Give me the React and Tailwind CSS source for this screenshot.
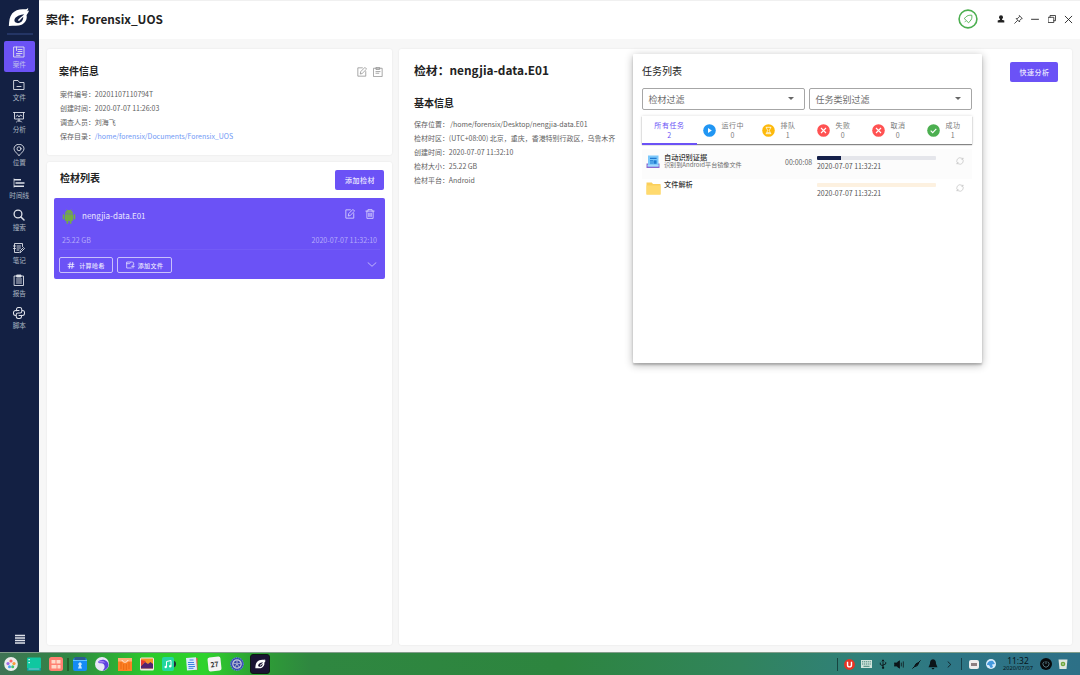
import React from "react";

const LINE = { fill: "none", stroke: "currentColor", strokeLinecap: "round", strokeLinejoin: "round" };

function Icon({ className = "", box = "0 0 24 24", w = 1.8, children }) {
  return (
    <svg viewBox={box} className={"block shrink-0 " + className} {...LINE} strokeWidth={w}>
      {children}
    </svg>
  );
}

function Flame({ className }) {
  return (
    <svg viewBox="0 0 66 58" className={"block shrink-0 " + className}>
      <path
        fill="currentColor"
        fillRule="evenodd"
        d="M2 55C3 40 4 27 12 17C21 6 36 2 52 4C55 4 58 3 61 0C61 4 60 8 57 10L64 8C62 14 59 18 56 22C59 33 52 46 41 51C31 56 17 53 2 55ZM49 19C38 20 21 25 19 37C18 44 25 47 33 46C43 44 46 35 46 27C42 30 39 34 35 38C34 40 30 40 30 37C32 32 42 27 49 19Z"
      />
    </svg>
  );
}

const navItems = [
  {
    label: "案件",
    active: true,
    icon: <path d="M2 2h20v20H2zM7 2v7M10 7h8M10 11h8M7 15h11M7 18.500h7" />,
  },
  { label: "文件", icon: <path d="M2 3h8l3 4h9v14H2zM8 15h8" /> },
  { label: "分析", icon: <path d="M1 3h22M3 3v13h18V3M12 16v4M7 22l2-2h6l2 2M6 11l3-3 3 4 3-4 3 2" /> },
  {
    label: "位置",
    icon: (
      <>
        <path d="M12 23C6 17 2 13.500 2 9.500a10 9 0 0 1 20 0c0 4-4 7.500-10 13.500z" />
        <circle cx="12" cy="9.500" r="4" />
      </>
    ),
  },
  {
    label: "时间线",
    icon: (
      <>
        <path strokeWidth="1.500" strokeLinecap="butt" d="M2 3v18" />
        <path strokeWidth="3.400" strokeLinecap="butt" d="M2 5.500h14M5 12h18M2 18.500h20" />
      </>
    ),
  },
  {
    label: "搜索",
    icon: (
      <>
        <circle cx="10" cy="10" r="7.800" strokeWidth="2.600" />
        <path strokeWidth="3" d="M16 16l6 6" />
      </>
    ),
  },
  { label: "笔记", icon: <path d="M19 9V3H3v18h9M1 8h4M1 13h4M8 8h7M8 12h7M8 16h4M14 21l1-4 6-6 2 2-6 6z" /> },
  {
    label: "报告",
    icon: (
      <>
        <path d="M3 4h18v19H3zM7 10h10M7 14h10M7 18h10" />
        <path fill="currentColor" d="M8 2h8v4H8z" />
      </>
    ),
  },
  {
    label: "脚本",
    icon: (
      <path
        strokeWidth="2.100"
        d="M7 7.500V5c0-2.500 1.500-4 4-4h2.500C16 1 17.500 2.500 17.500 5v4c0 2-1.500 3-3.500 3h-4c-2 0-3.500 1-3.500 3v4c0 2.500 1.500 4 4 4H13c2.500 0 4-1.500 4-4v-2.500M12 7H5.500C3 7 1 8.500 1 11v2c0 2.500 2 4 4 4h1.500M17.500 7H19c2.500 0 4 1.500 4 4v2c0 2.500-1.500 4-4 4h-7"
      />
    ),
  },
];

function Sidebar() {
  return (
    <aside className="flex w-[39px] shrink-0 flex-col items-center bg-[#132043] text-[#dfe2ea]">
      <Flame className="mt-[8px] mr-[2px] h-[19px] w-[22px] text-white" />
      <div className="mt-[6px] h-[2px] w-[26px] bg-[#243565]" />
      <nav className="mt-[6px] flex flex-col gap-[1.650px]">
        {navItems.map((item) => (
          <div
            key={item.label}
            className={
              "flex h-[31px] w-[31px] flex-col items-center rounded-[2px] pr-[0.500px] " +
              (item.active ? "bg-[#6b52f6]" : "")
            }
          >
            <Icon className="mt-[5px] h-[12px] w-[12px]">{item.icon}</Icon>
            <span className="mt-[1.200px] whitespace-nowrap text-[6.600px] leading-[10px] opacity-75">
              {item.label}
            </span>
          </div>
        ))}
      </nav>
      <Icon className="mt-auto mb-[8px] h-[10px] w-[10px]" box="0 0 10 10" w={1.3}>
        <path strokeLinecap="butt" d="M0 1.500h10M0 4h10M0 6.500h10M0 9h10" />
      </Icon>
    </aside>
  );
}

function Header() {
  return (
    <header className="flex h-[39px] shrink-0 items-center border-t border-[#f0f0f0] bg-white pr-[7px] pb-[2px] pl-[7px] text-[#222]">
      <h1 className="pb-px text-[11.800px] font-bold">案件：Forensix_UOS</h1>
      <div className="ml-auto flex items-center">
        <svg viewBox="0 0 20 20" className="mr-[19px] block h-[20px] w-[20px]" fill="none" stroke="#4caf50">
          <circle cx="10" cy="10" r="8.900" strokeWidth="1.600" />
          <path
            strokeWidth="0.900"
            strokeLinejoin="round"
            d="M13.800 6.200C11 6 9 6.600 7.800 8.200L6.200 9.500l4.400 4.300 1.400-1.700c1.600-1.300 2.200-3.200 1.800-5.900zM7.600 12.200l-1 1"
          />
        </svg>
        <svg viewBox="0 0 8 8" className="mr-[9px] block h-[8px] w-[8px]" fill="#222">
          <circle cx="4" cy="2.300" r="2" />
          <path d="M3 3.500h2v1.200l2.300.8V7.500H.7V5.500L3 4.700z" />
        </svg>
        <Icon className="mr-[8px] h-[9px] w-[9px]" box="0 0 9 9" w={0.8}>
          <path d="M5.500.8 8.300 3.500 7.300 3.800 5.700 5.500 5.500 7 2.200 3.600 3.800 3.400 5.300 1.700zM3.500 5.500.7 8.300" />
        </Icon>
        <Icon className="mr-[9px] h-[8px] w-[8px]" box="0 0 8 8" w={0.9}>
          <path d="M.5 4.300h7" />
        </Icon>
        <Icon className="mr-[8px] h-[8px] w-[8px]" box="0 0 8 8" w={0.8}>
          <path d="M.5 2.300h5.300v5.200H.5zM2 2.300V.5h5.500v5.200H5.800" />
        </Icon>
        <Icon className="h-[9px] w-[9px]" box="0 0 9 9" w={0.9}>
          <path d="M1.200 1.200l6.600 6.600M7.800 1.200 1.200 7.800" />
        </Icon>
      </div>
    </header>
  );
}

function InfoLine({ label, children }) {
  return (
    <div className="flex h-[14px] items-center whitespace-nowrap text-[6.980px] leading-[14px] text-[#606060]">
      <span>{label}：</span>
      {children}
    </div>
  );
}

const EditPath = <path d="M13 2H2v20h19V11M8 16l1-5L19 1l4 4-10 10z" />;

function CaseInfo() {
  return (
    <section className="h-[106px] rounded-[2px] bg-white pt-[13px] pr-[9.500px] pl-[13px] shadow-[0_0_2px_rgba(0,0,0,0.09)]">
      <div className="-ml-px flex h-[18px] items-center justify-between">
        <h2 className="pb-px text-[10px] font-bold text-[#222]">案件信息</h2>
        <div className="flex gap-[6px] pt-[2px] text-[#8b8b8b]">
          <Icon className="h-[10px] w-[10px]">{EditPath}</Icon>
          <Icon className="h-[10px] w-[10px]">
            <path d="M2 3h20v20H2zM8 1h8v5H8zM7 11h10M7 15h7" />
          </Icon>
        </div>
      </div>
      <div className="pt-[7px]">
        <InfoLine label="案件编号">20201107110794T</InfoLine>
        <InfoLine label="创建时间">2020-07-07 11:26:03</InfoLine>
        <InfoLine label="调查人员">刘海飞</InfoLine>
        <InfoLine label="保存目录">
          <span className="text-[#6f98f5]">/home/forensix/Documents/Forensix_UOS</span>
        </InfoLine>
      </div>
    </section>
  );
}

function OutlineButton({ icon, children }) {
  return (
    <button className="flex h-[16px] items-center justify-center gap-[3px] rounded-[2px] border border-[#c9c0fb] pt-px text-[6px] font-medium tracking-[0.400px] text-[#ebe8fe] first:w-[54px] last:w-[55px]">
      {icon}
      {children}
    </button>
  );
}

function EvidenceList() {
  return (
    <section className="flex grow flex-col rounded-[2px] bg-white px-[7px] pt-[8px] shadow-[0_0_2px_rgba(0,0,0,0.09)]">
      <div className="flex h-[20px] items-center justify-between pr-px pl-[6px]">
        <h2 className="pb-[6px] text-[10px] font-bold text-[#222]">检材列表</h2>
        <button className="flex h-[20px] w-[49px] items-center justify-center rounded-[2px] bg-[#6b52f6] pl-px text-[7px] font-medium tracking-[0.500px] text-[#ebe8fe]">
          添加检材
        </button>
      </div>
      <article className="mt-[8px] flex h-[81px] flex-col rounded-[2px] bg-[#6b52f6] px-[5px]">
        <div className="flex h-[36px] items-center pl-[3px]">
          <svg viewBox="0 0 14 15" className="mt-px block h-[15px] w-[14px]" fill="#74ab45">
            <path d="M3 4.700C3.200 3 4 2 5 1.500L4.400.5 4.800.3 5.500 1.300a4 4 0 0 1 3 0L9.200.3l.4.200L9 1.500C10 2 10.800 3 11 4.700z" />
            <path d="M3 5.200h8v6.100a.8.8 0 0 1-.8.800H9.500v1.800a.8.8 0 0 1-1.700 0v-1.800H6.200v1.800a.8.8 0 0 1-1.700 0v-1.800h-.7a.8.8 0 0 1-.8-.8z" />
            <rect x=".7" y="5.200" width="1.700" height="5.400" rx=".8" />
            <rect x="11.600" y="5.200" width="1.700" height="5.400" rx=".8" />
            <circle cx="5.300" cy="3.200" r=".4" fill="#6b52f6" />
            <circle cx="8.700" cy="3.200" r=".4" fill="#6b52f6" />
          </svg>
          <span className="ml-[6px] pt-px text-[8.050px] text-[#e9e5fe]">nengjia-data.E01</span>
          <div className="mr-[5px] ml-auto flex gap-[10px] pb-[4px] text-[#dcd6fd]">
            <Icon className="h-[10px] w-[10px]" w={2}>
              {EditPath}
            </Icon>
            <Icon className="h-[10px] w-[10px]" w={2}>
              <path d="M2 5h20M7 5V1.500h10V5M4.500 5v17.500h15V5M9 10v8M12 10v8M15 10v8" />
            </Icon>
          </div>
        </div>
        <div className="flex h-[16px] items-center justify-between border-b border-[#735bf7] pr-[3px] pb-[3px] pl-[3px] text-[7.080px] text-[#b5aafb]">
          <span>25.22 GB</span>
          <span>2020-07-07 11:32:10</span>
        </div>
        <div className="flex h-[29px] items-center justify-between pr-[3px]">
          <div className="flex gap-[4px]">
            <OutlineButton
              icon={
                <Icon className="mr-px h-[7px] w-[8px]" w={3.2}>
                  <path d="M2 8h20M2 16h20M9 2 6 22M18 2l-3 20" />
                </Icon>
              }
            >
              计算哈希
            </OutlineButton>
            <OutlineButton
              icon={
                <Icon className="h-[8px] w-[9px]" box="0 0 27 24" w={2.2}>
                  <path d="M16 21H2V3h18l3 3v5M2 8h9l2-3M17 16h8M21 12v9" />
                </Icon>
              }
            >
              添加文件
            </OutlineButton>
          </div>
          <Icon className="h-[5px] w-[10px] text-[#d5cefd]" box="0 0 10 5" w={0.8}>
            <path d="M1 .7 5 4.300 9 .7" />
          </Icon>
        </div>
      </article>
    </section>
  );
}

function Detail() {
  return (
    <section className="flex w-[673px] shrink-0 items-start justify-between rounded-[2px] bg-white pr-[14px] pl-[15px] shadow-[0_0_2px_rgba(0,0,0,0.09)]">
      <div>
        <h1 className="mt-[12px] text-[11.850px] leading-[18px] font-bold text-[#222]">检材：nengjia-data.E01</h1>
        <h2 className="mt-[16px] mb-[6px] text-[10px] leading-[16px] font-bold text-[#222]">基本信息</h2>
        <InfoLine label="保存位置">
          <span className="pl-[1.500px]">/home/forensix/Desktop/nengjia-data.E01</span>
        </InfoLine>
        <InfoLine label="检材时区">(UTC+08:00) 北京，重庆，香港特别行政区，乌鲁木齐</InfoLine>
        <InfoLine label="创建时间">2020-07-07 11:32:10</InfoLine>
        <InfoLine label="检材大小">25.22 GB</InfoLine>
        <InfoLine label="检材平台">Android</InfoLine>
      </div>
      <button className="mt-[13px] flex h-[20px] w-[48px] items-center justify-center rounded-[2px] bg-[#6b52f6] pl-px text-[7px] font-medium tracking-[0.500px] text-[#ebe8fe]">
        快速分析
      </button>
    </section>
  );
}

const statusIcons = {
  run: (
    <>
      <circle cx="6.500" cy="6.500" r="6.300" fill="#2196f3" />
      <path d="M5 3.900v5.200l3.800-2.600z" fill="#fff" />
    </>
  ),
  queue: (
    <>
      <circle cx="6.500" cy="6.500" r="6.300" fill="#fdb90b" />
      <path
        d="M3.700 3.300h5.600M3.700 9.700h5.600M4.500 3.500c0 1.800 1.200 2.100 1.200 3S4.500 7.700 4.500 9.500M8.500 3.500c0 1.800-1.200 2.100-1.200 3s1.200 1.200 1.200 3M5 8.700h3"
        stroke="#fff"
        strokeWidth=".8"
        fill="none"
      />
    </>
  ),
  fail: (
    <>
      <circle cx="6.500" cy="6.500" r="6.300" fill="#ff5252" />
      <path d="M4 4l5 5M9 4 4 9" stroke="#fff" strokeWidth="1.100" />
    </>
  ),
  ok: (
    <>
      <circle cx="6.500" cy="6.500" r="6.300" fill="#4caf50" />
      <path d="M3.700 6.600l2 2 3.600-3.800" stroke="#fff" strokeWidth="1.100" fill="none" />
    </>
  ),
};

const tabs = [
  { name: "运行中", count: 0, icon: "run", pad: "pl-[6px]" },
  { name: "排队", count: 1, icon: "queue", pad: "pl-[10px]" },
  { name: "失败", count: 0, icon: "fail", pad: "pl-[10px]" },
  { name: "取消", count: 0, icon: "fail", pad: "pl-[10px]" },
  { name: "成功", count: 1, icon: "ok", pad: "pl-[10px]" },
];

function Filter({ children }) {
  return (
    <div className="flex h-[22px] flex-1 items-center justify-between rounded-[2px] border border-[#a6a6a6] pt-px pr-[10px] pl-[5.500px] text-[9px] text-[#6e6e6e]">
      {children}
      <span className="mb-[2px] h-0 w-0 border-x-[3px] border-t-[3px] border-x-transparent border-t-[#666]" />
    </div>
  );
}

function Task({ icon, name, note, elapsed, value, track, shade }) {
  return (
    <div className={"flex h-[27px] " + (shade ? "bg-[#fcfcfc]" : "")}>
      <div className="w-[22px] pl-[3px]">{icon}</div>
      <div className="w-[121px] whitespace-nowrap">
        <div className="mt-px text-[7.200px] leading-[8px] font-medium text-[#333]">{name}</div>
        <div className="mt-px text-[6.120px] leading-[6px] text-[#6d6d6d]">{note}</div>
      </div>
      <div className="w-[32px] pt-[5px] text-[7px] leading-[10px] text-[#666]">{elapsed}</div>
      <div className="w-[119px] pt-[3.500px]">
        <div className={"h-[4px] w-full overflow-hidden rounded-[1px] " + track}>
          <div className="h-full bg-[#15204a]" style={{ width: value + "%" }} />
        </div>
        <div className="mt-px text-[6.950px] leading-[11px] text-[#555]">2020-07-07 11:32:21</div>
      </div>
      <Icon className="mt-[5px] ml-[20px] h-[8px] w-[8px] text-[#c4c4c4]" w={2.2}>
        <path d="M5 19A10 10 0 0 1 16 2.800M19 5A10 10 0 0 1 8 21.200M2 20h4v-4M22 4h-4v4" />
      </Icon>
    </div>
  );
}

function TaskPopup() {
  return (
    <div className="absolute top-[54px] left-[633px] h-[309px] w-[349px] rounded-[1px] bg-white pt-[9px] pr-[10px] pl-[9px] shadow-[0_2px_2px_rgba(0,0,0,0.18),0_2px_8px_rgba(0,0,0,0.3)]">
      <h2 className="text-[10px] leading-[16px] text-[#222]">任务列表</h2>
      <div className="mt-[9px] flex gap-[4px]">
        <Filter>检材过滤</Filter>
        <Filter>任务类别过滤</Filter>
      </div>
      <div className="mt-[6px] flex h-[28px] shadow-[0_1px_1px_rgba(0,0,0,0.45),0_0_3px_rgba(0,0,0,0.14)]">
        <div className="h-[28.500px] w-[55px] border-b-2 border-[#6b52f6] bg-white pt-[4px] text-center text-[7px] leading-[10px] tracking-[0.600px] text-[#6b52f6]">
          所有任务
          <div>2</div>
        </div>
        {tabs.map((t) => (
          <div key={t.name} className={"flex w-[55px] pt-[4px] " + t.pad}>
            <svg viewBox="0 0 13 13" className="mt-[4px] mr-[5.500px] block h-[13px] w-[13px] shrink-0">
              {statusIcons[t.icon]}
            </svg>
            <div className="whitespace-nowrap text-center text-[7px] leading-[10px] tracking-[0.500px] text-[#7a7a7a]">
              {t.name}
              <div>{t.count}</div>
            </div>
          </div>
        ))}
      </div>
      <div className="mt-[5px] h-[3px] bg-[#fcfcfc]" />
      <Task
        shade
        name="自动识别证据"
        note="识别到Android平台镜像文件"
        elapsed="00:00:08"
        value={20}
        track="bg-[#e5e6eb]"
        icon={
          <svg viewBox="0 0 16 14" className="mt-[3px] block h-[14px] w-[16px]">
            <path d="M1.500 8.500h13V13h-13z" fill="#8a68cf" />
            <path d="M3 .5h10.500v11H3z" fill="#7cc8fb" />
            <path d="M5 3.300h6.600M5 5.800h3M5 8h3" stroke="#1f7ad0" strokeWidth="1.200" />
            <path d="M8.500 5.300h3.100v3.500H8.500z" fill="#1f7ad0" />
            <path d="M2.500 9.800h11v1.700h-11z" fill="#a6d9fd" />
          </svg>
        }
      />
      <Task
        name="文件解析"
        elapsed=""
        value={0}
        track="bg-[#fdf1e0]"
        icon={
          <svg viewBox="0 0 15 13" className="mt-[3px] ml-px block h-[13px] w-[15px]">
            <path d="M.5.500h5.200L7 2h7.500v10.500H.5z" fill="#fbcf5b" />
            <path d="M.5 3.500h14v9H.5z" fill="#ffda6e" />
          </svg>
        }
      />
    </div>
  );
}

function DockIcon({ className = "", size = "h-[14px] w-[14px]", box = "0 0 14 14", children }) {
  return (
    <svg viewBox={box} className={"block shrink-0 " + size + " " + className}>
      {children}
    </svg>
  );
}

function Dock() {
  return (
    <footer className="flex h-[23px] shrink-0 items-center justify-between border-t border-[#829d8b] bg-[linear-gradient(90deg,#3f7355_0px,#2f8743_70px,#2bcb2b_150px,#2ed32d_205px,#2da433_250px,#2f8740_310px,#2d853f_560px,#31845c_740px,#30807a_860px,#2e7685_950px,#2d7087_1080px)]">
      <div className="flex items-center pl-[4px]">
        <DockIcon>
          <circle cx="7" cy="7" r="6.900" fill="#ececec" />
          <circle cx="7" cy="4" r="1.600" fill="#f66" />
          <circle cx="4" cy="6.600" r="1.600" fill="#a16be8" />
          <circle cx="10" cy="6.600" r="1.600" fill="#fa9d3a" />
          <circle cx="5.500" cy="9.700" r="1.500" fill="#4aa0f6" />
          <circle cx="8.700" cy="9.700" r="1.500" fill="#48c36e" />
        </DockIcon>
        <DockIcon className="ml-[9px]">
          <rect y=".5" width="14" height="13" rx="1" fill="#10c7a0" />
          <path d="M0 11h14v2.500H0z" fill="#0b9ca0" />
          <path d="M1.500 2h1.300v1.300H1.500zM1.500 5h1.300v1.300H1.500z" fill="#fff" />
          <path d="M1.500 12h11" stroke="#a7eee8" strokeWidth=".8" />
        </DockIcon>
        <DockIcon className="ml-[8px]">
          <rect width="14" height="14" rx="2.500" fill="#ff8071" />
          <path d="M2.500 3h4v3.500h-4zM7.500 3h4v3.500h-4zM2.500 8h5v3.500h-5zM8.500 8h3v3.500h-3z" fill="#ffd9c8" />
        </DockIcon>
        <div className="mx-[4px] h-[13px] w-[2px] bg-[#245f2a]" />
        <DockIcon>
          <rect y="1" width="14" height="13" rx="2" fill="#158bf5" />
          <path d="M1.500 0h11v3h-11z" fill="#2b5c91" />
          <path d="M0 3.500h14" stroke="#64c4ff" />
          <path d="M7 5l2 2-1 1.500 1 3H5l1-3L5 7z" fill="#c5e8ff" />
        </DockIcon>
        <DockIcon className="ml-[8px]">
          <circle cx="7" cy="7" r="7" fill="#e8e6f8" />
          <path d="M3 5C6 1 13 3 13.500 7.500c0 3.500-3 6-6 6.200C11 11 10 6 6 6.300 4.500 6.400 3.500 6 3 5z" fill="#5c42de" />
          <path d="M3 5c2-2 6-1.500 7.500 1C8 4.500 6 6.500 3 5z" fill="#a47cf6" />
        </DockIcon>
        <DockIcon className="ml-[9px]">
          <path d="M0 1h14v13H0z" fill="#fd8025" />
          <path d="M0 1h14v3.500H0z" fill="#ffaf74" />
          <path d="M3 5v7M11 5v7M5.700 7v6M8.300 7v6" stroke="#e35f0c" strokeWidth=".7" />
          <path d="M4 3c.5 3 5.500 3 6 0" stroke="#fff" fill="none" strokeWidth=".8" />
        </DockIcon>
        <DockIcon className="ml-[8px]">
          <rect y=".5" width="14" height="13" rx="1.500" fill="#f2e8e5" />
          <path d="M1 1.500h12v10H1z" fill="#f79327" />
          <path d="M1 9l4-4 3 2 2.500-2L13 7v4.500H1z" fill="#552470" />
          <path d="M1 3l5 1-5 5z" fill="#e83930" />
        </DockIcon>
        <DockIcon className="ml-[8px]">
          <circle cx="10.500" cy="7" r="3.500" fill="#252a35" />
          <rect width="12" height="14" rx="2" fill="#23d6a1" />
          <path d="M4.500 10V4.500L9 3.500V9" stroke="#fff" fill="none" />
          <circle cx="3.700" cy="10" r="1.200" fill="#fff" />
          <circle cx="8.200" cy="9.200" r="1.200" fill="#fff" />
        </DockIcon>
        <DockIcon className="ml-[9px]">
          <path d="M4 1h8.500v12H5z" fill="#e5544d" />
          <path d="M1 1l10-.7 1 12.400-10 .8z" fill="#dceaff" />
          <path d="M4.500 3h4M3 5.500h6M3 7.500h6.500M3.500 9.500h6.500M3.500 11.300h5" stroke="#3c82e4" />
        </DockIcon>
        <div className="ml-[9px] h-[14px] w-[13px] -rotate-6 rounded-[2px] bg-[#f4f4f4] text-center text-[7px] leading-[14px] font-bold text-[#333]">
          27
        </div>
        <DockIcon className="ml-[9px]">
          <circle cx="7" cy="7" r="6.300" fill="#3544a9" stroke="#5976df" strokeWidth="1.200" strokeDasharray="1.500 .8" />
          <circle cx="7" cy="7" r="4.200" fill="none" stroke="#c5c9dc" strokeWidth="1.200" />
          <path d="M7 7V3M7 7l4-1M7 7 3 6M7 7l2.500 3.500M7 7l-2.500 3.500" stroke="#b9bdd2" strokeWidth=".9" />
        </DockIcon>
        <div className="ml-[6px] flex h-[20px] w-[20px] items-center justify-center rounded-[3px] border border-[#0b1a12] bg-[#1a1433] text-white">
          <Flame className="h-[10px] w-[11px]" />
        </div>
      </div>
      <div className="flex items-center pr-[12px] text-[#0c1418]">
        <div className="h-[13px] w-px bg-[#17443f]" />
        <DockIcon className="ml-[6px]" size="h-[11px] w-[11px]">
          <circle cx="7" cy="7" r="6.900" fill="#e83324" />
          <path d="M4.500 3.500v4c0 3.300 5 3.300 5 0v-4" stroke="#fff" strokeWidth="1.800" fill="none" />
        </DockIcon>
        <DockIcon className="ml-[6px]" size="h-[8px] w-[11px]" box="0 0 11 8">
          <path d="M0 0h11v8H0z" fill="#cfe4dc" />
          <path d="M1 1.800h9M1 4h9" stroke="#35796e" strokeWidth=".9" strokeDasharray="1.200 .7" />
          <path d="M2.500 6.300h6" stroke="#35796e" strokeWidth=".9" />
        </DockIcon>
        <Icon className="ml-[7px] h-[10px] w-[8px]" box="0 0 8 10" w={0.9}>
          <path d="M4 1v8M4 7 1.300 5.500V4M4 6l2.700-1V3.500M3 2l1-1 1 1" />
          <circle cx="4" cy="8.800" r=".6" fill="currentColor" />
        </Icon>
        <Icon className="ml-[7px] h-[9px] w-[11px]" box="0 0 11 9" w={0.8}>
          <path d="M.5 3h2L5.500.8v7.400L2.500 6h-2z" fill="currentColor" />
          <path d="M7.300 3v3M9.300 1.800v5.400" />
        </Icon>
        <Icon className="ml-[7px] h-[9px] w-[9px]" box="0 0 9 9" w={1}>
          <path d="M.7 8.300 8.300.7" />
          <path d="M2.500 6.500 4 3.800l3-1.500-1.500 3z" fill="currentColor" />
        </Icon>
        <svg viewBox="0 0 10 11" className="ml-[7px] block h-[11px] w-[10px]" fill="currentColor">
          <path d="M5 .3c2.500.3 3 2 3 4.500L9.500 8.300h-9L2 4.800C2 2.300 2.500.600 5 .3zM3.700 9h2.600c0 1.700-2.600 1.700-2.600 0z" />
        </svg>
        <Icon className="ml-[9px] h-[7px] w-[5px]" box="0 0 5 7" w={0.8}>
          <path d="M1 .8l2.800 2.700L1 6.200" />
        </Icon>
        <div className="ml-[9px] h-[12px] w-px bg-[#17404a]" />
        <DockIcon className="ml-[7px]" size="h-[9px] w-[10px]" box="0 0 10 9">
          <rect width="10" height="9" rx="2" fill="#eee" />
          <path d="M2 3h6v3H2z" fill="#8b7f81" />
        </DockIcon>
        <DockIcon className="ml-[7px]" size="h-[10px] w-[10px]" box="0 0 10 10">
          <circle cx="5" cy="5" r="5" fill="#d9edfb" />
          <path d="M1 6C1 3 4 1 7 2l2 3-3 .5L7 8 5 9C3 8 5 6 1 6z" fill="#4499dd" />
        </DockIcon>
        <div className="ml-[6px] flex w-[32px] flex-col items-center font-['Noto_Sans',sans-serif] text-[#07151b]">
          <span className="text-[8.400px] leading-[9px]">11:32</span>
          <span className="whitespace-nowrap text-[5.600px] leading-[7px]">2020/07/07</span>
        </div>
        <svg viewBox="0 0 12 12" className="ml-[6px] block h-[12px] w-[12px]" fill="none" stroke="#5b7f8b" strokeWidth=".9">
          <circle cx="6" cy="6" r="6" fill="#080a0c" stroke="none" />
          <path d="M6 3v3M4.200 3.700a3 3 0 1 0 3.600 0" />
        </svg>
        <DockIcon className="ml-[6px]" size="h-[10px] w-[10px]" box="0 0 10 10">
          <path d="M.5.500h9L8.500 10h-7z" fill="#dfe6df" />
          <circle cx="5" cy="5" r="2.300" fill="#6ea63b" />
          <circle cx="5" cy="5" r=".8" fill="#dfe6df" />
        </DockIcon>
      </div>
    </footer>
  );
}

export default function App() {
  return (
    <div
      lang="zh-CN"
      className="relative flex h-[675px] w-[1080px] flex-col overflow-hidden bg-[#f7f7f7] font-['Noto_Sans_CJK_SC',sans-serif]"
    >
      <div className="flex h-[652px] shrink-0">
        <Sidebar />
        <div className="flex w-[1041px] flex-col">
          <Header />
          <main className="flex grow gap-[7px] pt-[10px] pb-[7px] pl-[8px]">
            <div className="flex w-[345px] flex-col gap-[7px]">
              <CaseInfo />
              <EvidenceList />
            </div>
            <Detail />
          </main>
        </div>
      </div>
      <Dock />
      <TaskPopup />
    </div>
  );
}
